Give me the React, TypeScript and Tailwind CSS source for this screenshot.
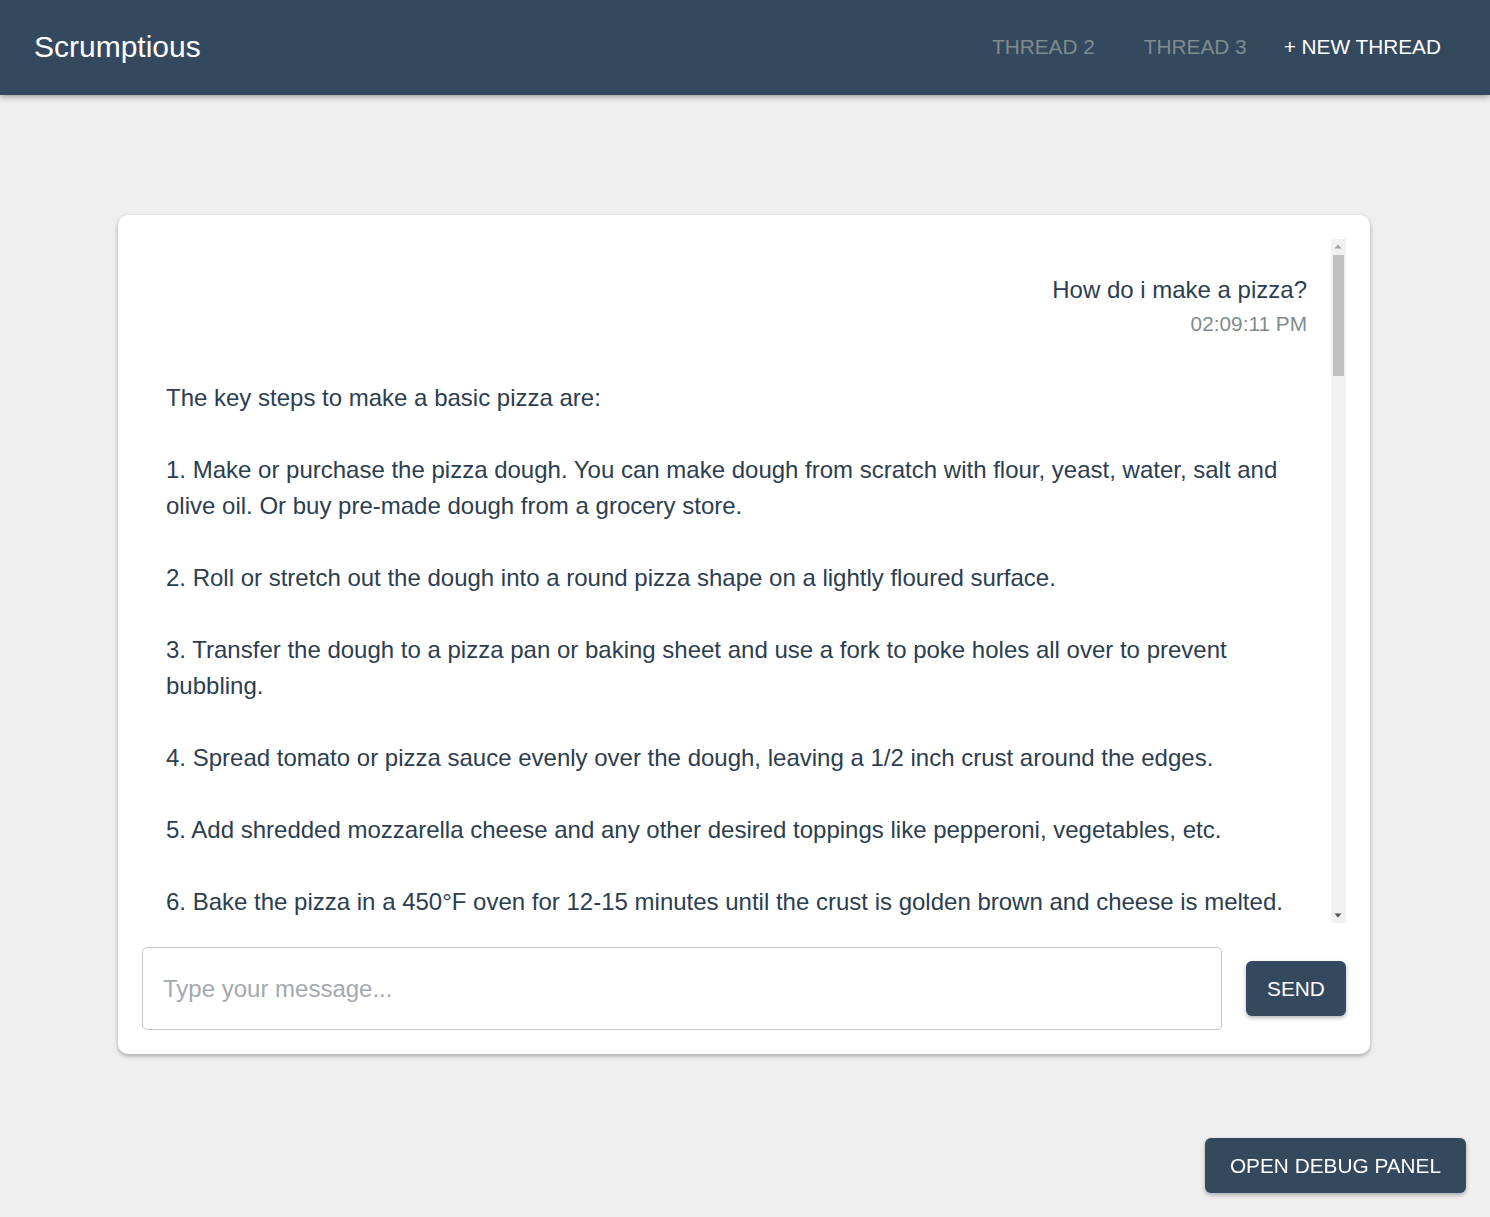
import React from "react";

type Message = { role: "user" | "assistant"; text: string; time?: string };

const messages: Message[] = [
  { role: "user", text: "How do i make a pizza?", time: "02:09:11 PM" },
  {
    role: "assistant",
    text: `The key steps to make a basic pizza are:

1. Make or purchase the pizza dough. You can make dough from scratch with flour, yeast, water, salt and olive oil. Or buy pre-made dough from a grocery store.

2. Roll or stretch out the dough into a round pizza shape on a lightly floured surface.

3. Transfer the dough to a pizza pan or baking sheet and use a fork to poke holes all over to prevent bubbling.

4. Spread tomato or pizza sauce evenly over the dough, leaving a 1/2 inch crust around the edges.

5. Add shredded mozzarella cheese and any other desired toppings like pepperoni, vegetables, etc.

6. Bake the pizza in a 450°F oven for 12-15 minutes until the crust is golden brown and cheese is melted.

7. Let the pizza cool for a few minutes before slicing and serving.

Some tips:

- Preheat the oven fully before baking, and use a pizza stone if you have one for a crispier crust.

- Don't overload the pizza with toppings or the center can get soggy.

- Brush the crust with a little olive oil or garlic butter for extra flavor.

Enjoy your homemade pizza!`,
  },
  { role: "user", text: "What toppings go well together?", time: "02:10:42 PM" },
  {
    role: "assistant",
    text: `Here are some classic topping combinations that work really well:

1. Margherita - fresh mozzarella, tomato sauce, fresh basil and a drizzle of olive oil.

2. Pepperoni and mushroom - the salty pepperoni pairs nicely with earthy mushrooms.

3. Hawaiian - ham and pineapple for a sweet and savory mix.

4. Supreme - pepperoni, sausage, green peppers, onions, black olives and mushrooms.

5. BBQ chicken - grilled chicken, BBQ sauce instead of tomato sauce, red onion and cilantro.

6. Veggie - spinach, bell peppers, red onions, tomatoes, olives and feta cheese.

Feel free to mix and match to find your own favorite combination!`,
  },
];

// drawn scrollbar (the browser here hides native ones)
function Scrollbar() {
  return (
    <div className="flex w-[15px] shrink-0 flex-col bg-[#f1f1f1]">
      <svg width="15" height="15" viewBox="0 0 15 15" className="shrink-0">
        <polygon points="3.5,9.5 10.5,9.5 7,5.5" fill="#a3a3a3" />
      </svg>
      <div className="flex-1 px-[2px] pt-px">
        <div className="h-[121px] bg-[#c1c1c1]" />
      </div>
      <svg width="15" height="15" viewBox="0 0 15 15" className="shrink-0">
        <polygon points="3.5,5.5 10.5,5.5 7,9.5" fill="#505050" />
      </svg>
    </div>
  );
}

function UserBubble({ m }: { m: Message }) {
  return (
    <div className="flex flex-col items-end py-2 text-right">
      <p className="text-[24px] leading-9 text-[#2c3e50]">{m.text}</p>
      <p className="text-[20.8px] leading-[31px] text-[#7f8c8d]">{m.time}</p>
    </div>
  );
}

function AssistantBubble({ m }: { m: Message }) {
  return (
    <div className="py-2">
      <p className="whitespace-pre-wrap text-[24px] leading-9 text-[#2c3e50]">{m.text}</p>
    </div>
  );
}

export default function App() {
  return (
    <div
      className="min-h-screen bg-[#efefef]"
      style={{ fontFamily: '"Liberation Sans", Arial, sans-serif' }}
    >
      <header className="flex h-[95px] items-center justify-between bg-[#34495e] pb-[2px] pl-[34px] pr-[49px] shadow-[0_2px_6px_rgba(0,0,0,0.35)]">
        <h1 className="text-[30px] text-white">Scrumptious</h1>
        <nav className="flex items-center text-[20.8px]">
          <button className="mr-[49px] text-[#7f8c8d]">THREAD 2</button>
          <button className="mr-[37px] text-[#7f8c8d]">THREAD 3</button>
          <button className="text-white">+ NEW THREAD</button>
        </nav>
      </header>

      <main className="ml-[118px] mt-[120px] flex w-[1252px] flex-col gap-6 rounded-[10px] bg-white p-6 shadow-[0_2px_4px_rgba(0,0,0,0.3)]">
        <div className="flex h-[684px]">
          <div className="flex-1 overflow-y-auto [scrollbar-width:none]">
            <div className="flex flex-col gap-[25px] px-6 pb-6 pt-[25px]">
              {messages.map((m, i) =>
                m.role === "user" ? <UserBubble key={i} m={m} /> : <AssistantBubble key={i} m={m} />
              )}
            </div>
          </div>
          <Scrollbar />
        </div>

        <div className="flex items-center gap-6">
          <input
            type="text"
            placeholder="Type your message..."
            className="h-[83px] flex-1 rounded-[5px] border border-[#c8c8c8] px-5 text-[24px] text-[#2c3e50] outline-none placeholder:text-[#a3a9b0]"
          />
          <button className="h-[55px] w-[100px] rounded-[6px] bg-[#34495e] text-[20.8px] text-white shadow-[0_2px_4px_rgba(0,0,0,0.3)]">
            SEND
          </button>
        </div>
      </main>

      <button className="fixed bottom-6 right-6 h-[55px] w-[261px] rounded-[6px] bg-[#34495e] text-[20.8px] text-white shadow-[0_2px_4px_rgba(0,0,0,0.3)]">
        OPEN DEBUG PANEL
      </button>
    </div>
  );
}
